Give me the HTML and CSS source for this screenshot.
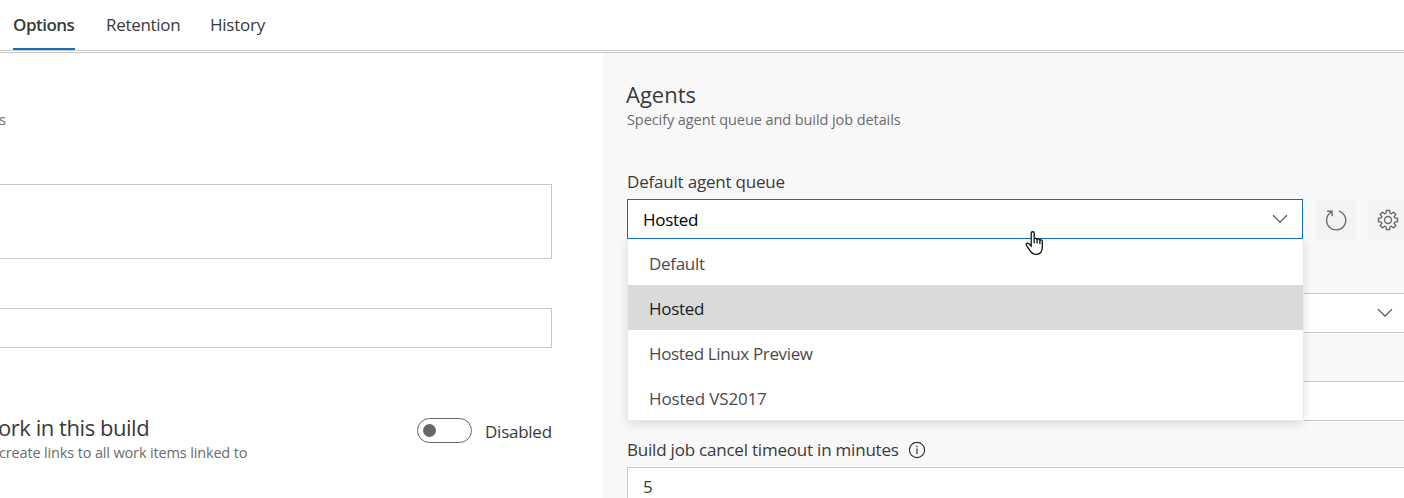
FILE: index.html
```
<!DOCTYPE html>
<html lang="en">
<head>
<meta charset="utf-8">
<title>Build options</title>
<link rel="stylesheet" href="styles.css">
</head>
<body>
<nav class="tabs">
  <a class="tab tab-active">Options</a>
  <a class="tab tab-retention">Retention</a>
  <a class="tab tab-history">History</a>
</nav>
<main class="panels">
  <section class="left">
    <p class="subtitle left-note">s</p>
    <div class="box box-tall"></div>
    <div class="box"></div>
    <div class="link-row">
      <div class="link-copy">
        <h2 class="heading link-heading">ork in this build</h2>
        <p class="subtitle link-text">create links to all work items linked to</p>
      </div>
      <span class="toggle"><span class="knob"></span></span>
      <span class="toggle-label">Disabled</span>
    </div>
  </section>
  <section class="right">
    <h2 class="heading agents">Agents</h2>
    <p class="subtitle specify">Specify agent queue and build job details</p>
    <label class="label queue-label">Default agent queue</label>
    <div class="queue-row">
      <div class="select">
        <span class="value">Hosted</span>
        <svg class="chevron" width="16" height="10" viewBox="0 0 16 10"><path d="M1 1.2 8 8.2 15 1.2"/></svg>
        <div class="menu">
          <div class="item item-default">Default</div>
          <div class="item item-on">Hosted</div>
          <div class="item item-linux">Hosted Linux Preview</div>
          <div class="item item-vs">Hosted VS2017</div>
        </div>
        <svg class="pointer" width="20" height="26" viewBox="0 0 20 26"><path d="M6.2 16V3.3C6.2 1.2 9.2 1.2 9.2 3.3V9.4C9.4 7.7 12.1 7.9 12.1 9.8 12.5 8.4 14.9 8.8 14.9 10.5 15.3 9.3 17.3 9.8 17.3 11.3V17C17.3 21.8 14.8 24.3 11.3 24.3 7.8 24.3 6.4 22.9 4.8 20.3L1.5 15.3C.6 13.7 2.5 12.4 3.9 13.7L6.2 16ZM9.2 9.2V13.2M12.1 9.8V13.6M14.9 10.5V14"/></svg>
      </div>
      <div class="button button-refresh">
        <svg class="icon" width="24" height="24" viewBox="0 0 24 24"><path d="M7.2 4.1A9.6 9.6 0 1 0 14.9 3.1M3.1 3.2H8.1V8.2"/></svg>
      </div>
      <div class="button">
        <svg class="icon" width="24" height="24" viewBox="0 0 24 24"><circle cx="12" cy="12" r="3.5"/><path d="M10.4 2.5H13.6L14.1 5.3 15.3 5.8 17.6 4.1 19.9 6.4 18.2 8.7 18.7 9.9 21.5 10.4V13.6L18.7 14.1 18.2 15.3 19.9 17.6 17.6 19.9 15.3 18.2 14.1 18.7 13.6 21.5H10.4L9.9 18.7 8.7 18.2 6.4 19.9 4.1 17.6 5.8 15.3 5.3 14.1 2.5 13.6V10.4L5.3 9.9 5.8 8.7 4.1 6.4 6.4 4.1 8.7 5.8 9.9 5.3Z"/></svg>
      </div>
    </div>
    <div class="field field-select"><svg class="chevron" width="16" height="10" viewBox="0 0 16 10"><path d="M1 1.2 8 8.2 15 1.2"/></svg></div>
    <div class="field"></div>
    <div class="timeout-row">
      <label class="label timeout-label">Build job cancel timeout in minutes</label>
      <svg class="info" width="18" height="18" viewBox="0 0 18 18"><circle cx="9" cy="9" r="7.6"/><path d="M9 7.6V13M9 4.8V6.2"/></svg>
    </div>
    <div class="field field-timeout"><span class="five">5</span></div>
  </section>
</main>
</body>
</html>
```

FILE: styles.css
```
* { box-sizing: border-box; }
body {
  margin: 0;
  width: 1404px;
  height: 498px;
  overflow: hidden;
  background: #fff;
  color: #3a3a3a;
  font: 17px/24px "Open Sans", "Noto Sans", sans-serif;
}
h2, p { margin: 0; font-weight: 400; }
.tabs, .label, .value, .item, .toggle-label, .heading, .subtitle { white-space: nowrap; }
.tabs {
  display: flex;
  gap: 31px;
  height: 53px;
  padding-left: 13px;
  border-bottom: 3px double #c8c8c8;
}
.tab { height: 50px; padding-top: 13px; }
.tab-active { width: 62px; border-bottom: 2px solid #106ebe; font-weight: 600; letter-spacing: -0.5px; }
.tab-retention { width: 73px; letter-spacing: -0.3px; }
.tab-history { letter-spacing: -0.25px; }
.panels { display: flex; height: 445px; overflow: hidden; }
.left { flex: 0 0 602px; min-width: 0; padding: 57px 50px 0 0; }
.heading { font-size: 22px; line-height: 28px; }
.subtitle { font-size: 14.5px; line-height: 20px; color: #6c6c6c; }
.left-note { margin-left: -1px; }
.box { height: 40px; margin-bottom: 68px; border: 1px solid #c8c8c8; border-left: 0; }
.box-tall { height: 75px; margin: 54px 0 49px; }
.link-row { display: flex; height: 60px; }
.link-copy { width: 417px; margin-top: -3px; }
.link-heading { margin-left: -2px; letter-spacing: -0.45px; }
.link-text { margin: 2px 0 0 -1px; letter-spacing: -0.15px; }
.toggle { width: 55px; height: 25px; margin-top: 2px; padding: 5px; border: 1px solid #666; border-radius: 13px; }
.knob { display: block; width: 13px; height: 13px; border-radius: 50%; background: #666; }
.toggle-label { margin: 4px 0 0 13px; letter-spacing: -0.25px; }
.right { flex: 0 0 806px; padding: 27px 0 0 25px; background: #f8f8f8; }
.agents { margin-left: -1px; }
.specify { margin-top: 2px; letter-spacing: -0.08px; }
.label { display: block; }
.queue-label { margin: 40px 0 5px; letter-spacing: -0.2px; }
.queue-row { display: flex; gap: 12px; }
.select {
  position: relative;
  display: flex;
  justify-content: space-between;
  align-items: center;
  width: 676px;
  height: 40px;
  padding: 0 14px 0 15px;
  border: 1px solid #106ebe;
  background: #fff;
  color: #000;
}
.value { padding-top: 1px; letter-spacing: -0.3px; }
.chevron { fill: none; stroke: #444; stroke-width: 1.1; }
.menu {
  position: absolute;
  top: 39px;
  left: 0;
  width: 675px;
  padding-top: 1px;
  background: #fff;
  box-shadow: 0 0 0 1px #eaeaea, 0 3px 10px rgba(0, 0, 0, .14);
  color: #4a4a4a;
  clip-path: inset(0 -14px -16px -14px);
}
.item { height: 45px; padding: 12px 21px 0; letter-spacing: -0.3px; }
.item-on { background: #dadada; color: #1a1a1a; }
.item-linux { letter-spacing: -0.36px; }
.item-vs { letter-spacing: -0.15px; }
.pointer { position: absolute; left: 397px; top: 30px; fill: #fff; stroke: #111; stroke-width: 1.3; }
.button { display: flex; align-items: center; justify-content: center; width: 40px; height: 40px; margin-top: 1px; background: #f3f3f3; }
.button-refresh { margin-left: 1px; }
.icon { fill: none; stroke: #6c6c6c; stroke-width: 1.4; }
.field { height: 40px; width: 781px; margin-top: 48px; border: 1px solid #c8c8c8; background: #fff; }
.field-select { display: flex; align-items: center; justify-content: flex-end; margin-top: 53px; padding-right: 14px; }
.timeout-row { display: flex; align-items: center; gap: 9px; margin-top: 17px; }
.timeout-label { letter-spacing: -0.21px; }
.info { fill: none; stroke: #333; stroke-width: 1.2; }
.field-timeout { margin-top: 5px; padding: 7px 15px; }
.five { letter-spacing: -0.3px; }
```
